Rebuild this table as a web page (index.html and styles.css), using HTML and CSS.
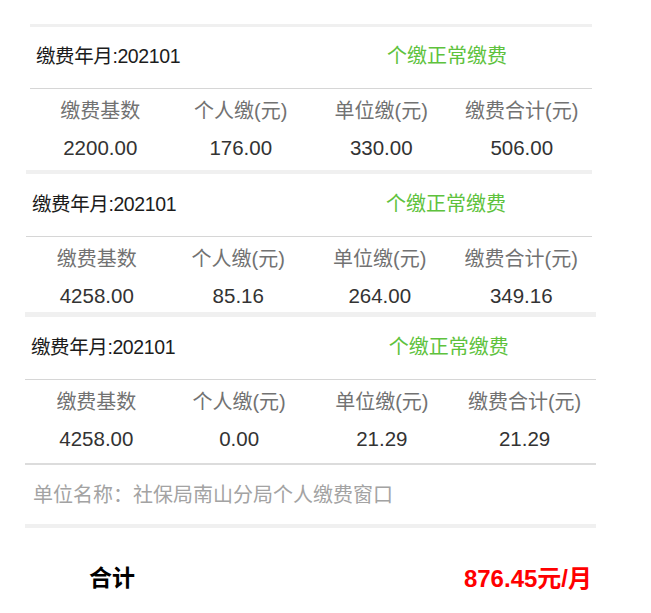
FILE: index.html
```html
<!DOCTYPE html>
<html lang="zh-CN">
<head>
<meta charset="utf-8">
<title>缴费明细</title>
<link rel="stylesheet" href="styles.css">
</head>
<body>
<div class="page">
  <section class="card card--a">
    <div class="title-row">
      <div class="title-left">缴费年月:202101</div>
      <div class="title-right">个缴正常缴费</div>
    </div>
    <div class="table">
      <div class="cell head">缴费基数</div>
      <div class="cell head">个人缴(元)</div>
      <div class="cell head">单位缴(元)</div>
      <div class="cell head">缴费合计(元)</div>
      <div class="cell val">2200.00</div>
      <div class="cell val">176.00</div>
      <div class="cell val">330.00</div>
      <div class="cell val">506.00</div>
    </div>
  </section>

  <section class="card card--b">
    <div class="title-row">
      <div class="title-left">缴费年月:202101</div>
      <div class="title-right">个缴正常缴费</div>
    </div>
    <div class="table">
      <div class="cell head">缴费基数</div>
      <div class="cell head">个人缴(元)</div>
      <div class="cell head">单位缴(元)</div>
      <div class="cell head">缴费合计(元)</div>
      <div class="cell val">4258.00</div>
      <div class="cell val">85.16</div>
      <div class="cell val">264.00</div>
      <div class="cell val">349.16</div>
    </div>
  </section>

  <section class="card card--c">
    <div class="title-row">
      <div class="title-left">缴费年月:202101</div>
      <div class="title-right">个缴正常缴费</div>
    </div>
    <div class="table">
      <div class="cell head">缴费基数</div>
      <div class="cell head">个人缴(元)</div>
      <div class="cell head">单位缴(元)</div>
      <div class="cell head">缴费合计(元)</div>
      <div class="cell val">4258.00</div>
      <div class="cell val">0.00</div>
      <div class="cell val">21.29</div>
      <div class="cell val">21.29</div>
    </div>
    <div class="unit-row">单位名称：社保局南山分局个人缴费窗口</div>
  </section>

  <div class="total-row">
    <span class="total-label">合计</span>
    <span class="total-value">876.45元/月</span>
  </div>
</div>
</body>
</html>
```

FILE: styles.css
```css
* { box-sizing: border-box; }

html, body {
  margin: 0;
  padding: 0;
  background: #ffffff;
}

body {
  font-family: "Liberation Sans", "Noto Sans CJK SC", sans-serif;
  color: #222222;
}

.page {
  padding-top: 24px;
  width: 651px;
}

.card {
  background: #ffffff;
  border-top: 3px solid #f0f0f0;
}

.card--a { margin-left: 30px; width: 562px; }
.card--b { margin-left: 26px; width: 566px; border-top-width: 4px; }
.card--c { margin-left: 25px; width: 571px; border-top-width: 5px; }

.title-row {
  display: grid;
  grid-template-columns: 1fr 1fr;
  align-items: center;
  height: 62px;
  padding-bottom: 6px;
  border-bottom: 1px solid #d6d6d6;
  font-size: 20px;
}

.card--b .title-row,
.card--c .title-row { height: 63px; }

.title-left {
  padding-left: 6px;
  color: #1c1c1c;
  font-size: 19.5px;
  letter-spacing: -0.4px;
}

.title-right {
  text-align: center;
  padding-right: 9px;
  color: #5ec23d;
}

.table {
  display: grid;
  grid-template-columns: repeat(4, 1fr);
  grid-template-rows: 44px 30px;
  align-items: center;
  font-size: 20px;
  padding-bottom: 7px;
}

.card--b .table { padding-bottom: 1px; }
.card--c .table {
  height: 85px;
  padding-bottom: 9px;
  border-bottom: 2px solid #dcdcdc;
}

.cell {
  text-align: center;
  white-space: nowrap;
}

.head { color: #727272; padding-bottom: 4px; }
.val { color: #333333; font-size: 20.5px; }

.unit-row {
  height: 63px;
  display: flex;
  align-items: center;
  padding-left: 8px;
  padding-bottom: 2px;
  font-size: 20px;
  color: #a3a3a3;
  border-bottom: 4px solid #f0f0f0;
}

.total-row {
  display: flex;
  justify-content: space-between;
  align-items: center;
  margin-left: 25px;
  width: 571px;
  height: 100px;
  padding-left: 64px;
  padding-right: 4px;
  padding-bottom: 4px;
  font-weight: bold;
  font-size: 23px;
}

.total-label { color: #000000; }

.total-value {
  color: #ff0000;
  font-size: 24px;
}
```
